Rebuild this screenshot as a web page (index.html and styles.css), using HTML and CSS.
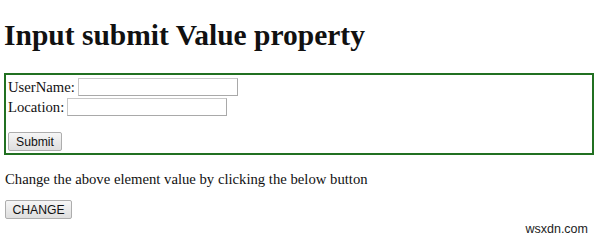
FILE: index.html
```html
<!DOCTYPE html>
<html lang="en">

<head>
    <meta charset="UTF-8">
    <meta name="viewport" content="width=device-width, initial-scale=1.0">
    <title>Input submit Value property</title>
    <link rel="stylesheet" href="styles.css">
</head>

<body>
    <h1 class="title">Input submit Value property</h1>
    <form class="frm" id="FORM1">
        <div class="row">
            <label for="USR">UserName:</label>
            <input type="text" id="USR" class="txt">
        </div>
        <div class="row">
            <label for="LOC">Location:</label>
            <input type="text" id="LOC" class="txt">
        </div>
        <div class="row-btn">
            <input type="submit" id="SUBMIT1" class="btn" value="Submit">
        </div>
    </form>
    <p class="msg">Change the above element value by clicking the below button</p>
    <button type="button" class="btn" id="CHG">CHANGE</button>
    <span class="mark">wsxdn.com</span>
</body>

</html>
```

FILE: styles.css
```css
* {
    box-sizing: border-box;
}

body {
    margin: 0;
    padding: 0 6px 0 4px;
    font-family: "Liberation Serif", "Times New Roman", serif;
    font-size: 14.7px;
    color: #111;
    background: #fff;
}

.title {
    font-size: 29.5px;
    font-weight: bold;
    margin: 19px 0 21px 0;
}

.frm {
    border: 2px solid #217021;
    padding: 2px 2px 2px 2px;
}

.row {
    display: flex;
    align-items: center;
    height: 20px;
}

.row label {
    margin-right: 3px;
}

.txt {
    width: 160px;
    height: 18px;
    border: 1px solid #a9a9a9;
    border-top-color: #c8c8c8;
    border-left-color: #c8c8c8;
    padding: 0 2px;
    font-size: 12px;
    margin: 0;
}

.row-btn {
    margin-top: 15px;
    height: 19px;
}

.btn {
    font-family: "Liberation Sans", Arial, sans-serif;
    font-size: 12.2px;
    color: #111;
    height: 19px;
    padding: 0 6px;
    margin: 0;
    border: 1px solid #adadad;
    border-radius: 2px;
    background: linear-gradient(#f6f6f6, #dedede);
}

#SUBMIT1 {
    width: 54px;
}

#CHG {
    width: 67px;
    margin-left: 1px;
}

.msg {
    margin: 16px 0 12px 1px;
}

.mark {
    position: absolute;
    right: 12px;
    bottom: 3px;
    font-family: "Liberation Sans", Arial, sans-serif;
    font-size: 12.5px;
    color: #222;
}
```
